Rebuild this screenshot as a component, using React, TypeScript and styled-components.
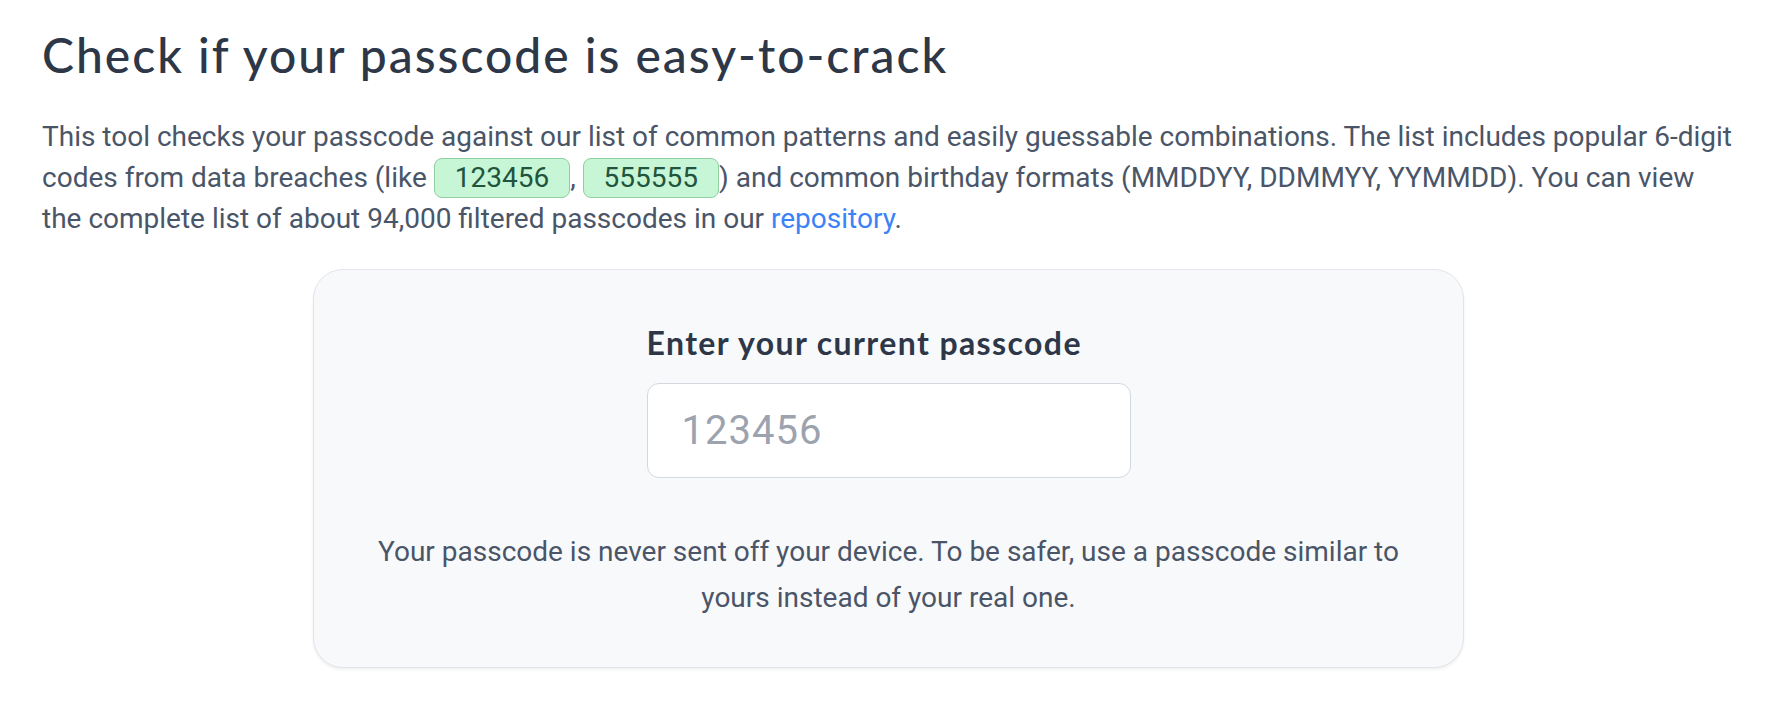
import React from "react";
import styled, { createGlobalStyle } from "styled-components";

const GlobalStyle = createGlobalStyle`
  html, body { margin: 0; padding: 0; background: #ffffff; }
  body { font-family: Roboto, "Noto Sans", sans-serif; -webkit-font-smoothing: antialiased; }
  * { box-sizing: border-box; }
`;

const Page = styled.main`
  padding: 26px 55px 40px 42px;
`;

const Title = styled.h1`
  margin: 0 0 32px;
  font-family: Lato, "Open Sans", sans-serif;
  font-weight: 500;
  font-size: 48px;
  letter-spacing: 2px;
  line-height: 1.2;
  color: #2d3748;
`;

const Intro = styled.p`
  margin: 0 0 30px;
  font-size: 28px;
  line-height: 41px;
  color: #4a5568;
`;

const Code = styled.span`
  display: inline-block;
  padding: 0 20px;
  line-height: 38px;
  border: 1px solid #8fcfa2;
  border-radius: 8px;
  background: #c6f6d5;
  color: #22543d;
  vertical-align: baseline;
`;

const Link = styled.a`
  color: #3b82f6;
  text-decoration: none;
`;

const Card = styled.section`
  width: 1151px;
  margin: 0 auto;
  padding: 52px 30px 46px;
  background: #f8f9fb;
  border: 1px solid #e2e4e9;
  border-radius: 30px;
  box-shadow: 0 2px 3px rgba(0, 0, 0, 0.06);
  display: flex;
  flex-direction: column;
  align-items: center;
`;

const Field = styled.label`
  display: flex;
  flex-direction: column;
  gap: 20px;
  width: 484px;
`;

const FieldLabel = styled.span`
  font-family: Lato, "Open Sans", sans-serif;
  font-weight: 700;
  font-size: 32px;
  letter-spacing: 1.4px;
  line-height: 1.3;
  color: #2d3748;
  white-space: nowrap;
`;

const Input = styled.input`
  width: 100%;
  height: 95px;
  padding: 0 34px;
  border: 1.5px solid #d4d7dd;
  border-radius: 12px;
  background: #ffffff;
  font-family: Roboto, sans-serif;
  font-size: 40px;
  letter-spacing: 1px;
  color: #2d3748;
  outline: none;
  &::placeholder { color: #9ca3af; }
`;

const Note = styled.p`
  margin: 51px 0 0;
  max-width: 1080px;
  text-align: center;
  font-size: 28px;
  line-height: 46px;
  color: #4a5568;
`;

export default function App() {
  return (
    <>
      <GlobalStyle />
      <Page>
        <Title>Check if your passcode is easy-to-crack</Title>
        <Intro>
          This tool checks your passcode against our list of common patterns and easily guessable
          combinations. The list includes popular 6-digit codes from data breaches (like{" "}
          <Code>123456</Code>, <Code>555555</Code>) and common birthday formats (MMDDYY, DDMMYY,
          YYMMDD). You can view the complete list of about 94,000 filtered passcodes in our{" "}
          <Link href="#">repository</Link>.
        </Intro>
        <Card>
          <Field>
            <FieldLabel>Enter your current passcode</FieldLabel>
            <Input type="text" inputMode="numeric" placeholder="123456" />
          </Field>
          <Note>
            Your passcode is never sent off your device. To be safer, use a passcode similar to
            yours instead of your real one.
          </Note>
        </Card>
      </Page>
    </>
  );
}
